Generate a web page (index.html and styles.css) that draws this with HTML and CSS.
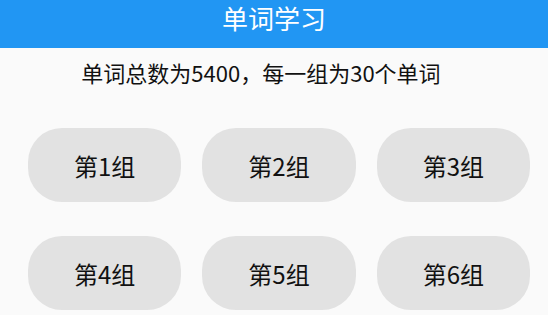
FILE: index.html
```html
<!DOCTYPE html>
<html lang="zh-CN">

<head>
    <meta charset="UTF-8">
    <meta name="viewport" content="width=device-width, initial-scale=1.0">
    <title>单词学习</title>
    <link rel="stylesheet" href="styles.css">
</head>

<body>
    <div class="app-bar">
        <p class="app-title">单词学习</p>
    </div>

    <p class="summary">单词总数为5400，每一组为30个单词</p>

    <div class="group-grid">
        <button class="group-btn">第1组</button>
        <button class="group-btn">第2组</button>
        <button class="group-btn">第3组</button>
        <button class="group-btn">第4组</button>
        <button class="group-btn">第5组</button>
        <button class="group-btn">第6组</button>
    </div>
</body>

</html>
```

FILE: styles.css
```css
* {
    margin: 0;
    padding: 0;
    box-sizing: border-box;
    font-family: "Noto Sans CJK SC", "Noto Sans", sans-serif;
}

body {
    background-color: #fafafa;
    height: 100vh;
    overflow: hidden;
}

.app-bar {
    height: 48px;
    background-color: #2196f3;
    text-align: center;
}

.app-title {
    padding-top: 2px;
    color: #fff;
    font-size: 26px;
    line-height: 32px;
}

.summary {
    margin-top: 9px;
    padding-right: 26px;
    font-size: 22px;
    line-height: 30px;
    color: #111;
    text-align: center;
}

.group-grid {
    display: grid;
    grid-template-columns: repeat(3, 1fr);
    column-gap: 21px;
    row-gap: 34px;
    margin-top: 41px;
    padding: 0 18px 0 28px;
}

.group-btn {
    height: 74px;
    border: none;
    border-radius: 34px;
    background-color: #e2e2e2;
    color: #111;
    font-size: 24px;
    cursor: pointer;
}
```
